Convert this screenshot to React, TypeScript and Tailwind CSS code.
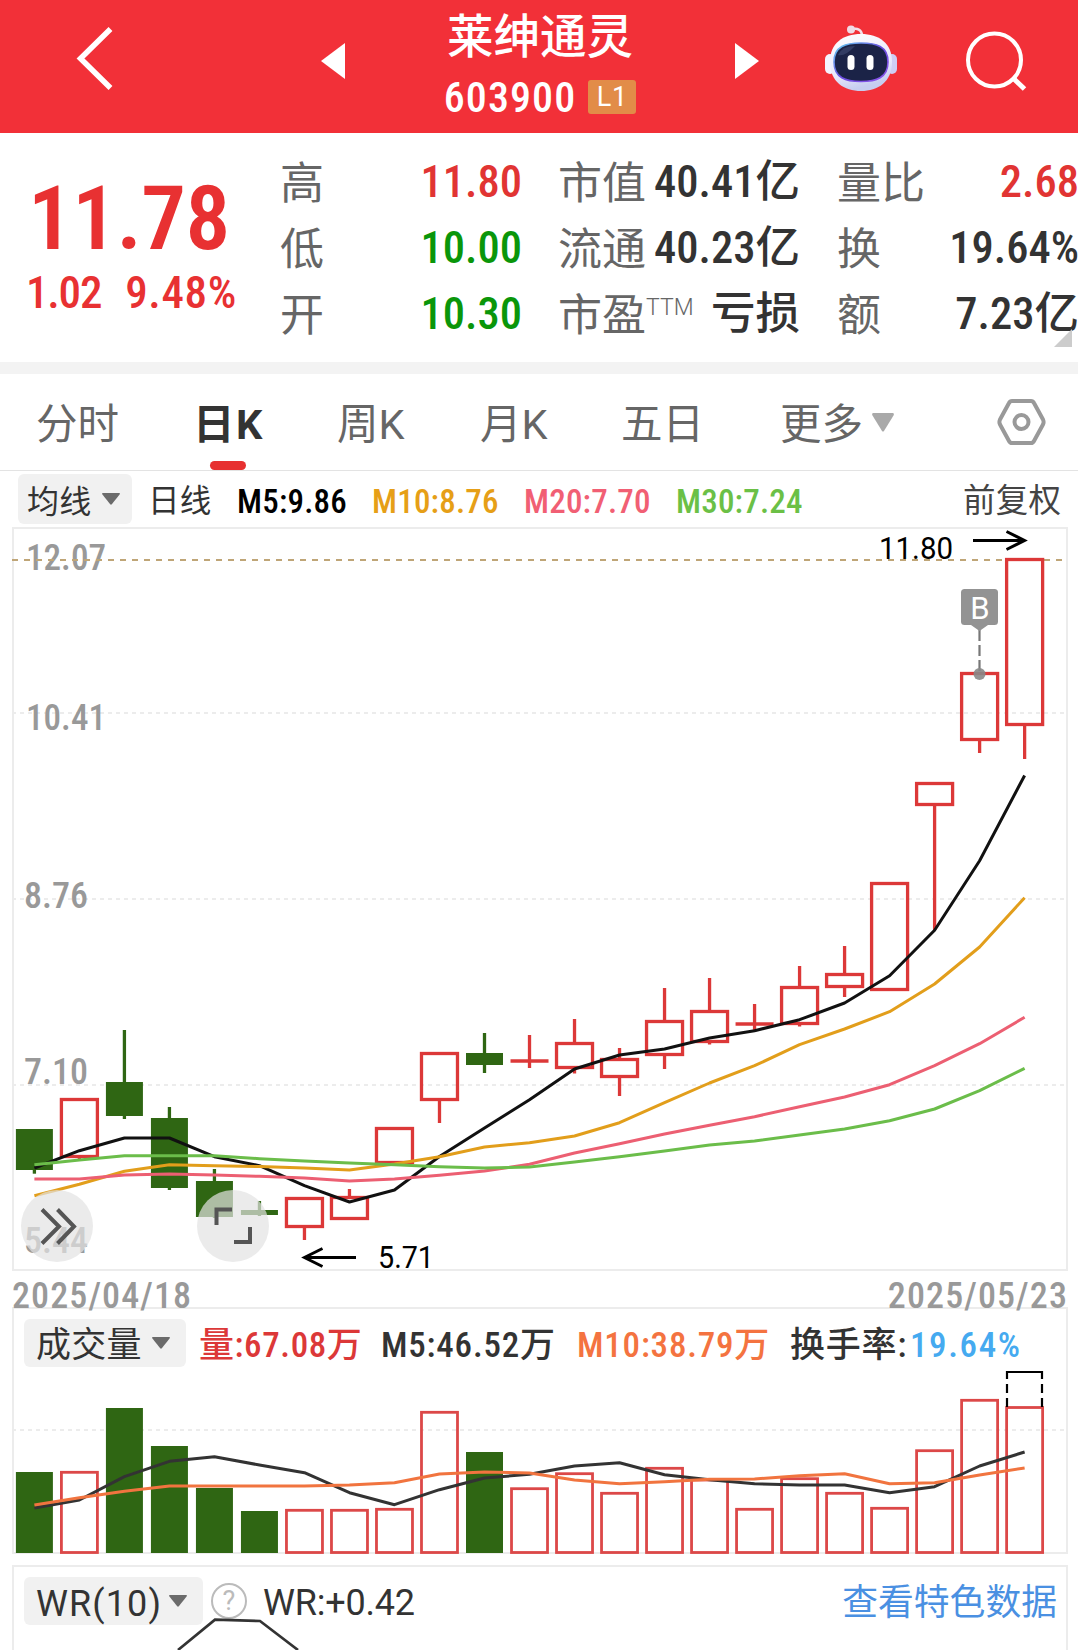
import type { ReactNode } from 'react';

type Candle = { up: boolean; top: number; bottom: number; high?: number; low?: number };

const STEP = 45.01;
const START_X = 34.4;
const xAt = (i: number) => START_X + i * STEP;

const candles: Candle[] = [
  { up: false, top: 1129, bottom: 1170, low: 1173.7 },
  { up: true, top: 1099.5, bottom: 1156.5, low: 1159 },
  { up: false, top: 1082, bottom: 1116, high: 1030, low: 1119 },
  { up: false, top: 1118, bottom: 1188, high: 1107, low: 1190 },
  { up: false, top: 1181, bottom: 1217, high: 1169, low: 1218 },
  { up: false, top: 1210, bottom: 1215, high: 1201, low: 1216 },
  { up: true, top: 1198.5, bottom: 1226.5, low: 1240 },
  { up: true, top: 1197.5, bottom: 1218.5, high: 1189 },
  { up: true, top: 1128.5, bottom: 1162.5 },
  { up: true, top: 1053.5, bottom: 1099.5, low: 1123 },
  { up: false, top: 1053, bottom: 1065, high: 1033, low: 1073 },
  { up: true, top: 1061, bottom: 1061, high: 1035, low: 1068 },
  { up: true, top: 1043.5, bottom: 1067.5, high: 1019, low: 1073.5 },
  { up: true, top: 1059.5, bottom: 1076.5, high: 1048, low: 1096 },
  { up: true, top: 1021.5, bottom: 1054.5, high: 988, low: 1069 },
  { up: true, top: 1011.5, bottom: 1041.5, high: 978, low: 1044.5 },
  { up: true, top: 1024, bottom: 1024, high: 1004, low: 1030 },
  { up: true, top: 987.5, bottom: 1023.5, high: 966, low: 1026.5 },
  { up: true, top: 974.5, bottom: 986.5, high: 946, low: 997 },
  { up: true, top: 883.5, bottom: 989.5 },
  { up: true, top: 783.5, bottom: 804.5, low: 930 },
  { up: true, top: 673.5, bottom: 739.5, low: 753 },
  { up: true, top: 559.5, bottom: 724.5, low: 759 },
];

const ma5 = [1168, 1150.7, 1138, 1138, 1156.7, 1165.7, 1185.7, 1202, 1190, 1156.5, 1128, 1099.7, 1069, 1055, 1049, 1038, 1030.7, 1019.7, 1003, 975.7, 930.3, 860.7, 775.5];
const ma10 = [1195.7, 1184.3, 1171.3, 1164.7, 1165.7, 1166.5, 1168, 1170, 1164, 1156.7, 1147, 1142.7, 1136, 1122.7, 1102.7, 1083, 1065.7, 1044.7, 1029, 1011.7, 984, 947, 897.7];
const ma20 = [1179, 1179, 1175, 1174, 1175, 1176.3, 1178, 1181, 1179, 1175.3, 1171, 1164.3, 1153, 1143.7, 1134, 1125.3, 1116.7, 1106.7, 1097, 1084.7, 1065.7, 1043.7, 1017.3];
const ma30 = [1164.7, 1160, 1155.7, 1155.7, 1155.7, 1158.7, 1161, 1163, 1164.7, 1166.7, 1168, 1167, 1162, 1156.7, 1151, 1145, 1141, 1135, 1129, 1120.7, 1109, 1090.7, 1068.3];

const volumeTops = [1472, 1472.3, 1408, 1446, 1488, 1511, 1510.3, 1510.3, 1509.3, 1412.3, 1452, 1488.7, 1473.7, 1493.3, 1468.3, 1480, 1509.3, 1478.7, 1493.3, 1508.3, 1450.7, 1400.3, 1407.5];
const volMa5 = [1508, 1500, 1476.7, 1461.3, 1456.7, 1465, 1472.7, 1492.7, 1504.7, 1489.7, 1478, 1474.3, 1466, 1462.7, 1474.7, 1479.7, 1483.7, 1485, 1485, 1492.7, 1486.7, 1466, 1452];
const volMa10 = [1505, 1497.7, 1491.3, 1486, 1486, 1486, 1486, 1485, 1482.7, 1474, 1472, 1473, 1480, 1483.7, 1481.7, 1479.3, 1479, 1475.7, 1473.7, 1483.7, 1482.7, 1475, 1468];

const Line = ({ values, color }: { values: number[]; color: string }) => (
  <polyline points={values.map((v, i) => `${xAt(i)},${v}`).join(' ')} fill="none" stroke={color} strokeWidth="3" strokeLinejoin="round" />
);

const Caret = ({ color = '#6b6b6b', className = 'w-[18px] h-3' }: { color?: string; className?: string }) => (
  <svg viewBox="0 0 18 12" preserveAspectRatio="none" className={className}>
    <path d="M0.8 0h16.4q1.2 0.4 0.4 1.6L9.8 11.3q-0.8 0.9-1.6 0L0.4 1.6Q-0.4 0.4 0.8 0Z" fill={color} />
  </svg>
);

const Robot = () => (
  <svg width="74" height="68" viewBox="0 0 74 68">
    <defs>
      <linearGradient id="shell" x1="0" y1="0" x2="0.3" y2="1">
        <stop offset="0" stopColor="#fff" />
        <stop offset="0.7" stopColor="#e9e8fb" />
        <stop offset="1" stopColor="#c6cdf0" />
      </linearGradient>
      <linearGradient id="rim" x1="0" y1="0" x2="1" y2="1">
        <stop offset="0" stopColor="#65d3f3" />
        <stop offset="0.5" stopColor="#6a4ce0" />
        <stop offset="1" stopColor="#8d55ea" />
      </linearGradient>
    </defs>
    <path d="M27 6C33 3 38 6 38 12" fill="none" stroke="#f3dfe9" strokeWidth="2.6" />
    <circle cx="27" cy="5.5" r="4" fill="#f0dbe6" />
    <rect x="1" y="30" width="10" height="20" rx="5" fill="#f4f3ff" />
    <rect x="63" y="30" width="10" height="20" rx="5" fill="#cfcdf4" />
    <path d="M37 10C55 10 68 19 68 38C68 58 54 67 37 67C20 67 6 58 6 38C6 19 19 10 37 10Z" fill="url(#shell)" />
    <path d="M37 19C52 19 64 22 64 38C64 54 52 57.5 37 57.5C22 57.5 10 54 10 38C10 22 22 19 37 19Z" fill="#1b2347" stroke="url(#rim)" strokeWidth="1.6" />
    <path d="M14 31Q18 22 31 22Q21 33 14 31Z" fill="#46527a" opacity="0.55" />
    <rect x="23.5" y="31" width="7" height="15" rx="3.5" fill="#fff" />
    <rect x="42.5" y="31" width="7" height="15" rx="3.5" fill="#fff" />
  </svg>
);

const Header = () => (
  <header className="flex h-[133px] bg-[#f23038] text-white">
    <div className="w-[321px] pl-[74px] pt-[24px]">
      <svg width="42" height="70" viewBox="0 0 42 70" fill="none" stroke="#fff" strokeWidth="5.5">
        <path d="M36.5 5L6.5 34.5L36.5 64" />
      </svg>
    </div>
    <svg width="24" height="36" viewBox="0 0 24 36" className="mt-[43px]">
      <path d="M0 18L24 0V36Z" fill="#fff" />
    </svg>
    <div className="w-[390px] pt-[12px] flex flex-col items-center">
      <div className="text-[46.5px] leading-[50px] font-medium">莱绅通灵</div>
      <div className="flex items-center mt-[18px] h-[34px] gap-[12px]">
        <span className="pt-[2px] text-[42px] font-medium font-stretch-[85%] tracking-[1.1px]">603900</span>
        <span className="w-[48px] h-[34px] rounded-[3px] bg-[#e28c48] flex items-center justify-center pt-px text-[27px] tracking-wide">L1</span>
      </div>
    </div>
    <svg width="24" height="36" viewBox="0 0 24 36" className="mt-[43px]">
      <path d="M24 18L0 0V36Z" fill="#fff" />
    </svg>
    <div className="ml-[65px] mt-[24px]">
      <Robot />
    </div>
    <svg width="64" height="64" viewBox="0 0 64 64" fill="none" stroke="#fff" strokeWidth="4" className="ml-[66px] mt-[29px]">
      <circle cx="30.5" cy="31" r="26.5" />
      <path d="M49 49L60.5 60" strokeWidth="5" />
    </svg>
  </header>
);

const Stat = ({ label, value, color = 'text-[#333]', sup }: { label: string; value: string; color?: string; sup?: string }) => (
  <div className="flex h-[66px] items-center justify-between whitespace-nowrap">
    <span className="flex pt-[4px] text-[44px] text-[#666]">
      {label}
      {sup && <span className="text-[23px] leading-[28px] font-light">{sup}</span>}
    </span>
    <span className={`text-[44.5px] font-medium font-stretch-[85%] ${color}`}>{value}</span>
  </div>
);

const Quote = () => (
  <section className="relative flex h-[229px] pt-[16px] overflow-hidden">
    <div className="w-[280px] shrink-0 text-[#e83132] font-medium font-stretch-[85%]">
      <div className="pl-[28px] pt-[25px] text-[89px] leading-[90px] font-semibold tracking-[-0.5px]">11.78</div>
      <div className="pl-[26px] pt-[4px] flex gap-[24px] text-[45px] leading-[50px] tracking-[-1.2px]">
        <span>1.02</span>
        <span className="tracking-[0.6px]">9.48%</span>
      </div>
    </div>
    <div className="w-[242px] shrink-0">
      <Stat label="高" value="11.80" color="text-[#e13433]" />
      <Stat label="低" value="10.00" color="text-[#0a960a]" />
      <Stat label="开" value="10.30" color="text-[#0a960a]" />
    </div>
    <div className="ml-[36px] w-[242px] shrink-0">
      <Stat label="市值" value="40.41亿" />
      <Stat label="流通" value="40.23亿" />
      <Stat label="市盈" value="亏损" sup="TTM" />
    </div>
    <div className="ml-[37px] w-[242px] shrink-0">
      <Stat label="量比" value="2.68" color="text-[#e13433]" />
      <Stat label="换" value="19.64%" />
      <Stat label="额" value="7.23亿" />
    </div>
    <svg width="18" height="18" className="absolute right-[6px] bottom-[15px]">
      <path d="M18 0V18H0Z" fill="#ccc" />
    </svg>
  </section>
);

const Tabs = () => (
  <nav className="grid h-[97px] border-b border-[#e3e3e3] grid-cols-[157px_144px_143px_141px_159px_214px_auto] pl-[36px] items-center text-[41.5px] text-[#666] whitespace-nowrap">
    <span className="pt-[5px]">分时</span>
    <span className="relative pt-[5px] font-bold text-[#333] tracking-[1.5px]">
      日K
      <i className="absolute left-[17px] top-[62px] w-[36px] h-[9px] rounded-full bg-[#e73030]" />
    </span>
    <span className="pt-[5px]">周K</span>
    <span className="pt-[5px]">月K</span>
    <span className="pt-[5px]">五日</span>
    <span className="flex items-center gap-[9px]">
      <span className="pt-[5px]">更多</span>
      <Caret color="#a9a9a9" className="w-[22px] h-[19px]" />
    </span>
    <svg width="50" height="50" viewBox="0 0 50 50" fill="none" stroke="#999" strokeWidth="4" strokeLinejoin="round" className="ml-[2px]">
      <path d="M16 4H35Q37 4 38 6L47 22.5Q48.2 25 47 27.5L38 44Q37 46 35 46H16Q14 46 13 44L4 27.5Q2.8 25 4 22.5L13 6Q14 4 16 4Z" />
      <circle cx="25.5" cy="25" r="7" />
    </svg>
  </nav>
);

const Pill = ({ children, className }: { children: ReactNode; className: string }) => (
  <button className={`flex items-center shrink-0 rounded-[6px] bg-[#f1f1f1] text-[#333] ${className}`}>
    <span className="pt-[5px]">{children}</span>
    <Caret />
  </button>
);

const MaRow = () => (
  <div className="flex h-[55px] pt-[3px] pl-[18px] text-[33px] items-start leading-[55px] font-medium font-stretch-[85%] tracking-[0.2px] whitespace-nowrap">
    <Pill className="w-[114px] h-[50px] pl-[9px] gap-[11px] text-[32px] leading-[46px] font-normal">均线</Pill>
    <span className="w-[105px] pl-[16px] text-[31.5px] font-normal text-[#333]">日线</span>
    <span className="w-[135px] text-black">M5:9.86</span>
    <span className="w-[152px] text-[#e69f17]">M10:8.76</span>
    <span className="w-[152px] text-[#f15f74]">M20:7.70</span>
    <span className="w-[287px] text-[#6bc046]">M30:7.24</span>
    <span className="text-[32.5px] font-normal text-[#444]">前复权</span>
  </div>
);

const axis = [
  { label: '12.07', y: 570, x: 26, w: 80 },
  { label: '10.41', y: 730, x: 26, w: 80 },
  { label: '8.76', y: 908, x: 24, w: 64 },
  { label: '7.10', y: 1084, x: 24, w: 64 },
  { label: '5.44', y: 1253, x: 24, w: 64 },
];

const PriceChart = () => (
  <div className="relative h-[746px]">
    <svg width="1078" height="746" viewBox="0 526 1078 746" className="block">
      {[713, 899, 1085].map((y) => (
        <path key={y} d={`M12 ${y}H1065`} stroke="#ececec" strokeWidth="2" strokeDasharray="4 4" />
      ))}
      <rect x="13" y="528" width="1054" height="742" fill="none" stroke="#ececec" strokeWidth="2" />
      <g fill="#999" fontSize="36" className="font-medium font-stretch-[85%]">
        {axis.map((a) => (
          <text key={a.label} x={a.x} y={a.y} textLength={a.w} lengthAdjust="spacingAndGlyphs">{a.label}</text>
        ))}
      </g>
      <path d="M12 560H1063" stroke="#bfa577" strokeWidth="2" strokeDasharray="6 6" />
      {candles.map((c, i) => {
        const x = xAt(i);
        const color = c.up ? '#dc3838' : '#2f6613';
        return (
          <g key={i} stroke={color} strokeWidth="3.3">
            {c.high && <path d={`M${x} ${c.high}V${c.top}`} />}
            {c.low && <path d={`M${x} ${c.bottom}V${c.low}`} />}
            {!c.up && <rect x={x - 18.5} y={c.top} width="37" height={c.bottom - c.top} fill={color} stroke="none" />}
            {c.up && c.top === c.bottom && <path d={`M${x - 19} ${c.top}h38`} strokeWidth="3.5" />}
            {c.up && c.top !== c.bottom && <rect x={x - 18} y={c.top} width="36" height={c.bottom - c.top} fill="none" />}
          </g>
        );
      })}
      <Line values={ma5} color="#111" />
      <Line values={ma10} color="#e29e1b" />
      <Line values={ma20} color="#ec5f72" />
      <Line values={ma30} color="#6bbd4a" />

      <g fill="none" stroke="#000" strokeWidth="3">
        <path d="M973 540.5H1024M1006.5 531.5L1024.5 540.5L1006.5 549.5" />
        <path d="M356 1257.5H305M322.5 1248.5L304.5 1257.5L322.5 1266.5" />
      </g>
      <g fontSize="31">
        <text x="879" y="559" textLength="74" lengthAdjust="spacingAndGlyphs">11.80</text>
        <text x="378" y="1268" textLength="56" lengthAdjust="spacingAndGlyphs">5.71</text>
      </g>

      <path d="M979.5 630V671" stroke="#777" strokeWidth="2.2" strokeDasharray="11 4" />
      <circle cx="979.5" cy="674" r="6" fill="#888" fillOpacity="0.9" />
      <path d="M971 625H988L979.5 631Z" fill="#939393" />
      <rect x="961" y="589" width="37" height="36" rx="3.5" fill="#939393" />
      <text x="980" y="619" textAnchor="middle" fontSize="31" fill="#fff">B</text>
    </svg>
    <button className="absolute left-[21px] top-[664px] w-[72px] h-[72px] rounded-full bg-[#e3e3e3]/70">
      <svg width="72" height="72" fill="none" stroke="#555" strokeWidth="4">
        <path d="M21 19.5L38 36.5L21 53.5M36.5 19.5L53 36.5L36.5 53.5" />
      </svg>
    </button>
    <button className="absolute left-[197px] top-[664px] w-[72px] h-[72px] rounded-full bg-[#e3e3e3]/70">
      <svg width="72" height="72" fill="none" stroke="#555" strokeWidth="4">
        <path d="M19.5 35V19.5H35M37 52H53V37" />
      </svg>
    </button>
  </div>
);

const Dates = () => (
  <div className="flex justify-between h-[35px] pl-[12px] pr-[10px] text-[36px] leading-[48px] font-medium font-stretch-[85%] tracking-[1.1px] text-[#999]">
    <span>2025/04/18</span>
    <span>2025/05/23</span>
  </div>
);

const VolumePanel = () => (
  <section className="ml-[12px] mr-[10px] h-[247px] border-2 border-[#ececec]">
    <div className="flex pt-[10px] pl-[10px] h-[60px] text-[35px] leading-[53px] font-medium font-stretch-[85%] tracking-[0.8px] whitespace-nowrap text-[#333]">
      <Pill className="w-[162px] h-[48px] pl-[12px] gap-[10px] text-[35px] leading-[44px] font-normal tracking-[0.3px]">成交量</Pill>
      <span className="ml-[13px] w-[182px] text-[#dc3838] tracking-[0.6px]">量:67.08万</span>
      <span className="w-[196px]">M5:46.52万</span>
      <span className="w-[213px] text-[#f47340]">M10:38.79万</span>
      <span className="w-[120px]">换手率:</span>
      <span className="text-[#45aaf0] tracking-[1.6px]">19.64%</span>
    </div>
    <svg width="1078" height="186" viewBox="0 1369 1078 186" className="-ml-[14px] w-[1078px] max-w-none">
      <path d="M12 1430H1065" stroke="#ececec" strokeWidth="2" strokeDasharray="4 4" />
      {candles.map((c, i) =>
        c.up ? (
          <rect key={i} x={xAt(i) - 18} y={volumeTops[i]} width="36" height={1552.5 - volumeTops[i]} fill="none" stroke="#dc4848" strokeWidth="2.8" />
        ) : (
          <rect key={i} x={xAt(i) - 18.5} y={volumeTops[i]} width="37" height={1553 - volumeTops[i]} fill="#2f6613" />
        )
      )}
      <path d="M1006 1372H1043" stroke="#000" strokeWidth="2.2" />
      <path d="M1007 1407V1371M1042 1407V1371" stroke="#000" strokeWidth="2.2" strokeDasharray="9 5" />
      <Line values={volMa5} color="#333" />
      <Line values={volMa10} color="#f1743f" />
    </svg>
  </section>
);

const WrPanel = () => (
  <section className="relative ml-[12px] mr-[10px] mt-[11px] h-[85px] border-2 border-b-0 border-[#ececec]">
    <div className="flex items-center pt-[10px] pl-[10px] pr-[9px] text-[36px] font-medium whitespace-nowrap text-[#333]">
      <Pill className="w-[179px] h-[48px] pl-[12px] gap-[11px] text-[36px] font-normal">
        <span className="block w-[122px] text-left tracking-[1.1px]">WR(10)</span>
      </Pill>
      <span className="ml-[8px] w-[36px] h-[36px] rounded-full border-[2.5px] border-[#bbb] text-[#bbb] text-[27px] font-normal flex items-center justify-center">?</span>
      <span className="ml-[16px] pt-[3px] font-normal tracking-[-0.2px]">WR:+0.42</span>
      <span className="ml-auto pt-[5px] text-[35.8px] font-normal text-[#4a90e2]">查看特色数据</span>
    </div>
    <svg width="140" height="34" viewBox="170 1616 140 34" className="absolute left-[156px] bottom-0">
      <path d="M178 1650L215 1619.7L260 1621L298 1650" fill="none" stroke="#333" strokeWidth="2.7" />
    </svg>
  </section>
);

const App = () => (
  <main className="w-[1078px] h-[1650px] overflow-hidden bg-white font-['Roboto','Noto_Sans_CJK_SC',sans-serif] leading-none">
    <Header />
    <Quote />
    <div className="h-[12px] bg-[#f3f3f3]" />
    <Tabs />
    <MaRow />
    <PriceChart />
    <Dates />
    <VolumePanel />
    <WrPanel />
  </main>
);

export default App;
